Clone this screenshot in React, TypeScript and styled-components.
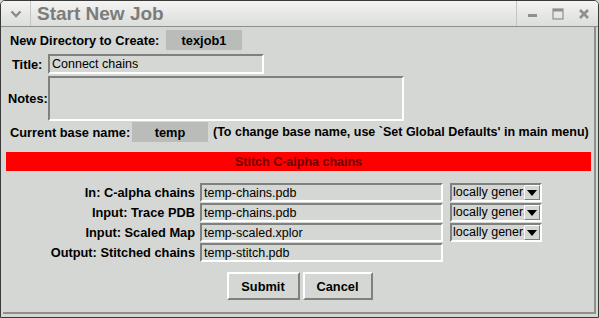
import React from "react";
import styled, { createGlobalStyle } from "styled-components";

const GlobalStyle = createGlobalStyle`
  html, body {
    margin: 0;
    padding: 0;
    background: #d4d7d3;
  }
  * {
    box-sizing: border-box;
  }
`;

const Window = styled.div`
  width: 599px;
  height: 318px;
  display: flex;
  flex-direction: column;
  background: #d4d7d3;
  border: 1px solid #3a3a3a;
  border-top-left-radius: 5px;
  border-top-right-radius: 5px;
  overflow: hidden;
  font-family: "Liberation Sans", Arial, sans-serif;
  color: #000;
`;

const TitleBar = styled.div`
  height: 26px;
  flex: none;
  display: flex;
  align-items: center;
  background: linear-gradient(#f4f4f2, #dcdedb);
  border-bottom: 1px solid #8e908d;
`;

const MenuButton = styled.div`
  width: 30px;
  height: 100%;
  display: flex;
  align-items: center;
  justify-content: center;
  border-right: 1px solid #c4c6c3;
`;

const TitleText = styled.div`
  flex: 1;
  padding-left: 6px;
  font-size: 19px;
  font-weight: bold;
  color: #7b7d7a;
`;

const Controls = styled.div`
  height: 100%;
  display: flex;
  align-items: center;
  gap: 14px;
  padding: 0 8px 0 10px;
  border-left: 1px solid #c4c6c3;
`;

const Frame = styled.div`
  flex: 1;
  display: flex;
  flex-direction: column;
  margin: 0 2px 3px 2px;
  border-right: 2px solid #8e908d;
  border-bottom: 2px solid #8e908d;
  padding: 3px 3px 0 3px;
`;

const Row = styled.div<{ $gap?: number; $top?: number }>`
  display: flex;
  align-items: center;
  gap: ${(p) => p.$gap ?? 0}px;
  margin-top: ${(p) => p.$top ?? 0}px;
`;

const Label = styled.span<{ $width?: number; $indent?: number; $size?: number }>`
  font-size: ${(p) => p.$size ?? 12.8}px;
  font-weight: bold;
  white-space: nowrap;
  width: ${(p) => (p.$width ? `${p.$width}px` : "auto")};
  padding-left: ${(p) => p.$indent ?? 0}px;
  flex: none;
`;

const ValueBox = styled.div`
  width: 76px;
  height: 20px;
  flex: none;
  background: #b9bcb8;
  display: flex;
  align-items: center;
  justify-content: center;
  font-size: 12.8px;
  font-weight: bold;
`;

const Field = styled.div<{ $width: number; $height?: number }>`
  width: ${(p) => p.$width}px;
  height: ${(p) => p.$height ?? 20}px;
  border: 2px solid;
  border-color: #7f817e #ffffff #ffffff #7f817e;
  padding: 1px 2px;
  font-size: 12.5px;
  line-height: 15px;
  white-space: nowrap;
  overflow: hidden;
`;

const Banner = styled.div`
  margin-top: 10px;
  width: 585px;
  height: 19px;
  background: #ff0000;
  display: flex;
  align-items: center;
  justify-content: center;
  font-size: 12.5px;
  font-weight: bold;
  color: #6e0000;
`;

const FileGrid = styled.div`
  margin-top: 12px;
  display: grid;
  grid-template-columns: 189px 245px 92px;
  column-gap: 5px;
  row-gap: 1px;
  align-items: center;
`;

const FileLabel = styled.span`
  text-align: right;
  font-size: 12.8px;
  font-weight: bold;
  white-space: nowrap;
`;

const Select = styled.div`
  width: 92px;
  height: 19px;
  display: flex;
  border: 2px solid;
  border-color: #7f817e #ffffff #ffffff #7f817e;
`;

const SelectText = styled.div`
  flex: 1;
  overflow: hidden;
  white-space: nowrap;
  font-size: 12.5px;
  line-height: 15px;
  padding-left: 1px;
`;

const Arrow = styled.div`
  width: 16px;
  display: flex;
  align-items: center;
  justify-content: center;
  border: 1px solid;
  border-color: #ffffff #7f817e #7f817e #ffffff;
`;

const Buttons = styled.div`
  margin-top: 10px;
  display: flex;
  justify-content: center;
  gap: 3px;
  padding-left: 2px;
`;

const Button = styled.button<{ $width: number }>`
  width: ${(p) => p.$width}px;
  height: 28px;
  background: #d4d7d3;
  border: 2px solid;
  border-color: #ffffff #7f817e #7f817e #ffffff;
  font-family: "Liberation Sans", Arial, sans-serif;
  font-size: 12.8px;
  font-weight: bold;
  color: #000;
  padding: 0;
`;

const fileRows = [
  { label: "In: C-alpha chains", value: "temp-chains.pdb", select: true },
  { label: "Input: Trace PDB", value: "temp-chains.pdb", select: true },
  { label: "Input: Scaled Map", value: "temp-scaled.xplor", select: true },
  { label: "Output: Stitched chains", value: "temp-stitch.pdb", select: false },
];

const App = () => {
  return (
    <>
      <GlobalStyle />
      <Window>
        <TitleBar>
          <MenuButton>
            <svg width="12" height="8" viewBox="0 0 12 8">
              <path d="M1.5 1.5 L6 6 L10.5 1.5" stroke="#8a8c89" strokeWidth="2.4" fill="none" />
            </svg>
          </MenuButton>
          <TitleText>Start New Job</TitleText>
          <Controls>
            <svg width="11" height="12" viewBox="0 0 11 12">
              <rect x="1" y="6" width="9" height="3" fill="#8e908d" />
            </svg>
            <svg width="12" height="12" viewBox="0 0 12 12">
              <rect x="1" y="1" width="10" height="10" fill="none" stroke="#8e908d" strokeWidth="1.2" />
              <rect x="1" y="1" width="10" height="2.5" fill="#8e908d" />
            </svg>
            <svg width="12" height="12" viewBox="0 0 12 12">
              <path d="M2 2 L10 10 M10 2 L2 10" stroke="#8e908d" strokeWidth="2.6" />
            </svg>
          </Controls>
        </TitleBar>
        <Frame>
          <Row $gap={5}>
            <Label $width={155} $indent={4}>New Directory to Create:</Label>
            <ValueBox>texjob1</ValueBox>
          </Row>
          <Row $top={4}>
            <Label $width={42} $indent={6}>Title:</Label>
            <Field $width={216}>Connect chains</Field>
          </Row>
          <Row $top={2}>
            <Label $width={42} $indent={2}>Notes:</Label>
            <Field $width={356} $height={45} />
          </Row>
          <Row $top={1}>
            <Label $width={126} $indent={4}>Current base name:</Label>
            <ValueBox>temp</ValueBox>
            <Label $indent={5} $size={12.5}>(To change base name, use `Set Global Defaults' in main menu)</Label>
          </Row>
          <Banner>Stitch C-alpha chains</Banner>
          <FileGrid>
            {fileRows.map((r) => (
              <React.Fragment key={r.label}>
                <FileLabel>{r.label}</FileLabel>
                <Field $width={243} $height={19}>{r.value}</Field>
                {r.select ? (
                  <Select>
                    <SelectText>locally generated</SelectText>
                    <Arrow>
                      <svg width="10" height="6" viewBox="0 0 10 6">
                        <path d="M0 0 L10 0 L5 6 Z" fill="#000" />
                      </svg>
                    </Arrow>
                  </Select>
                ) : (
                  <span />
                )}
              </React.Fragment>
            ))}
          </FileGrid>
          <Buttons>
            <Button $width={73}>Submit</Button>
            <Button $width={70}>Cancel</Button>
          </Buttons>
        </Frame>
      </Window>
    </>
  );
};

export default App;
